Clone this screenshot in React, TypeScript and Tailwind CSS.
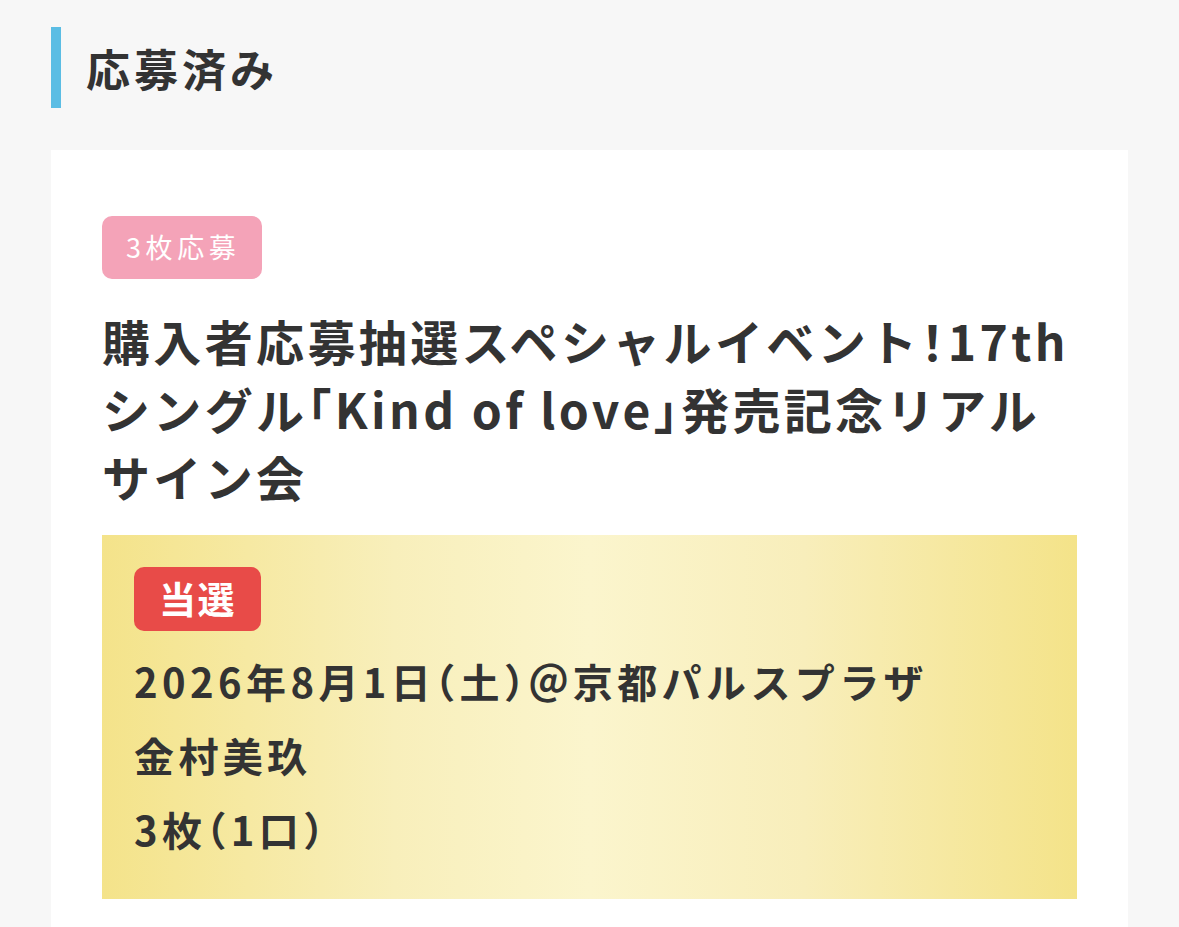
import React from 'react';

const font = { fontFamily: '"Noto Sans CJK JP", "Noto Sans", sans-serif' };

type Entry = {
    count: string;
    titleLines: React.ReactNode[];
    result: string;
    details: React.ReactNode[];
};

// fullwidth brackets set at half width, like the proportional font of the original
function Half({ children }: { children: React.ReactNode }) {
    return <span className="[font-feature-settings:'halt']">{children}</span>;
}

const entry: Entry = {
    count: '3枚応募',
    titleLines: [
        <>購入者応募抽選スペシャルイベント<Half>！</Half>17th</>,
        <>シングル<Half>「</Half>Kind of love<Half>」</Half>発売記念リアル</>,
        <>サイン会</>,
    ],
    result: '当選',
    details: [
        <>2026年8月1日<Half>（</Half>土<Half>）</Half>＠京都パルスプラザ</>,
        <>金村美玖</>,
        <>3枚<Half>（</Half>1口<Half>）</Half></>,
    ],
};

export default function App() {
    return (
        <div className="min-h-[927px] bg-[#f7f7f7] px-[51px] pt-[27px] text-[#333333]" style={font}>
            {/* Section heading */}
            <h2 className="flex h-[81px] items-center border-l-[10px] border-[#5bbde4] pl-[25px] text-[44px] font-bold tracking-[0.09em]">
                応募済み
            </h2>

            {/* Entry card */}
            <div className="mt-[42px] bg-white px-[51px] pt-[66px] pb-[40px]">
                <span className="inline-flex h-[63px] items-center rounded-[10px] bg-[#f4a3b8] pl-[24px] pr-[22px] text-[27px] tracking-[0.17em] text-white">
                    {entry.count}
                </span>

                <h3 className="mt-[27px] text-[48px] font-bold leading-[68px] tracking-[0.07em]">
                    {entry.titleLines.map((line, i) => (
                        <div key={i} className="whitespace-nowrap">{line}</div>
                    ))}
                </h3>

                {/* Result box */}
                <div className="mt-[25px] bg-[linear-gradient(90deg,#f4e38a_0%,#f8efbb_30%,#fbf5cd_50%,#f8eebb_72%,#f4e389_100%)] px-[32px] pt-[32px] pb-[33px]">
                    <span className="inline-flex h-[64px] items-center rounded-[10px] bg-[#e84b48] px-[25px] text-[37px] font-bold tracking-[0.04em] text-white">
                        {entry.result}
                    </span>
                    <div className="mt-[13px] text-[40px] font-bold leading-[74px] tracking-[0.11em]">
                        {entry.details.map((line, i) => (
                            <div key={i} className="whitespace-nowrap">{line}</div>
                        ))}
                    </div>
                </div>
            </div>
        </div>
    );
}
